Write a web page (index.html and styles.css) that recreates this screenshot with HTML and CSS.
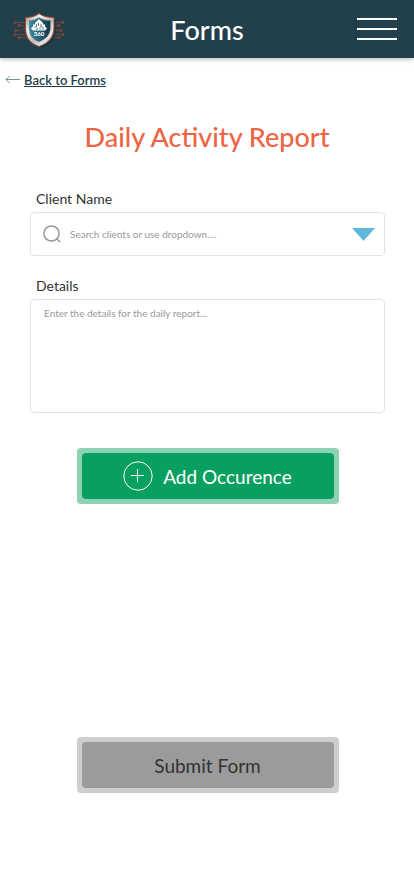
FILE: index.html
```html
<!DOCTYPE html>
<html lang="en">
<head>
<meta charset="utf-8">
<meta name="viewport" content="width=device-width, initial-scale=1">
<title>Daily Activity Report</title>
<link rel="stylesheet" href="styles.css">
</head>
<body>
<header class="topbar">
  <a class="logo" href="#" aria-label="Home">
    <svg width="54" height="42" viewBox="0 0 54 42" aria-hidden="true">
      <defs>
        <linearGradient id="metal" x1="0" y1="0" x2="1" y2="1">
          <stop offset="0" stop-color="#8b8b8b"/>
          <stop offset=".3" stop-color="#f2f2f2"/>
          <stop offset=".55" stop-color="#b9b9b9"/>
          <stop offset=".75" stop-color="#e8e8e8"/>
          <stop offset="1" stop-color="#777"/>
        </linearGradient>
        <linearGradient id="core" x1="0" y1="0" x2="1" y2="0">
          <stop offset="0" stop-color="#3d8ba0"/>
          <stop offset="1" stop-color="#123644"/>
        </linearGradient>
      </defs>
      <g fill="none" stroke="#8d4335" stroke-width=".8">
        <path d="M3 12.500H14M6 15.500H11L14 18.500M4 20.500H9L11 18.500H14M3 24.500H14M6 27.500H15"/>
        <path d="M50 12.500H38M46 15.500H41L38 18.500M48 20.500H43L41 18.500H38M50 24.500H38M46 27.500H38"/>
      </g>
      <g fill="#204049" stroke="#b64a31" stroke-width=".8">
        <circle cx="2" cy="12.500" r="1.100"/><circle cx="6" cy="15.500" r="1.100"/><circle cx="3" cy="20.500" r="1.100"/><circle cx="2" cy="24.500" r="1.100"/><circle cx="6" cy="27.500" r="1.100"/>
        <circle cx="50" cy="12.500" r="1.100"/><circle cx="46" cy="15.500" r="1.100"/><circle cx="48" cy="20.500" r="1.100"/><circle cx="50" cy="24.500" r="1.100"/><circle cx="46" cy="27.500" r="1.100"/>
      </g>
      <path class="logo-shadow" d="M28 5C32 8 37 9 43 9V18C43 28 38 35 28 39Z"/>
      <path d="M26 3.500C30 6.500 35 7.500 41 7.500V17C41 27 36 33 26 36.500C16 33 12.500 27 12.500 17V7.500C17 7.500 22 6.500 26 3.500Z" fill="url(#metal)" stroke="#a3452f"/>
      <path d="M26 7.500C29 9.500 33 10.500 37.500 10.500V17C37.500 25 33 29 26 32C19 29 16 25 16 17V10.500C19 10.500 23 9.500 26 7.500Z" fill="url(#core)" stroke="#9a9a9a" stroke-width=".5"/>
      <path d="M26 9L30 13V14.500H32V16.500L34 18.500L32 20.500H20L18 18.500L20 16.500V14.500H22V13Z" fill="#fff"/>
      <path d="M23.500 14V17H21.500M25.500 13V16M28 14V17H30.500M22.500 19H25M27 17.500V20M29 19H31" fill="none" stroke="#2b6070" stroke-width=".8"/>
      <text class="logo-text" x="26" y="26" text-anchor="middle">360</text>
    </svg>
  </a>
  <h1 class="topbar-title">Forms</h1>
  <button class="menu" type="button" aria-label="Menu"><span></span><span></span><span></span></button>
</header>
<main class="page">
  <nav class="crumb">
    <a class="back" href="#">
      <svg width="15" height="8" viewBox="0 0 15 8" aria-hidden="true"><path d="M15 3.500H1M4.500 0L1 3.500L4.500 7" fill="none" stroke="#71909a"/></svg>
      <span>Back to Forms</span>
    </a>
  </nav>
  <h2 class="title">Daily Activity Report</h2>
  <form class="form">
    <label class="label" for="client">Client Name</label>
    <div class="search">
      <svg width="18" height="18" viewBox="0 0 18 18" aria-hidden="true"><circle cx="8.500" cy="8.500" r="7.600" fill="none" stroke="#999" stroke-width="1.500"/><path d="M13.500 13.500L17.300 17.300" stroke="#999" stroke-width="1.500"/></svg>
      <input id="client" type="text" placeholder="Search clients or use dropdown....">
      <button class="drop" type="button" aria-label="Show clients">
        <svg width="23" height="13" viewBox="0 0 23 13" aria-hidden="true"><path d="M0 0H23L11.500 13Z" fill="#60b8d8"/></svg>
      </button>
    </div>
    <label class="label" for="details">Details</label>
    <textarea class="details" id="details" placeholder="Enter the details for the daily report..."></textarea>
    <button class="btn btn-add" type="button">
      <span class="btn-face">
        <svg width="30" height="30" viewBox="0 0 30 30" aria-hidden="true"><circle cx="15" cy="15" r="14.200" fill="none" stroke="#fff"/><path d="M8 14.500H21M14.500 8V21" stroke="#fff"/></svg>
        <span>Add Occurence</span>
      </span>
    </button>
    <button class="btn btn-submit" type="submit"><span class="btn-face">Submit Form</span></button>
  </form>
</main>
</body>
</html>
```
FILE: styles.css
```css
* {
  box-sizing: border-box;
}

body {
  margin: 0;
  background: #fff;
  color: #333;
  font-family: Lato, "Liberation Sans", sans-serif;
}

button,
input,
textarea {
  font-family: inherit;
}

.topbar {
  display: grid;
  grid-template-columns: 1fr auto 1fr;
  align-items: center;
  height: 58px;
  padding: 0 17px 0 13px;
  background: #22404b;
  box-shadow: 0 1px 5px rgba(0, 0, 0, 0.3);
}

.logo {
  display: flex;
}

.logo svg {
  margin-top: 4px;
}

.logo-shadow {
  fill: #142e37;
  opacity: 0.6;
}

.logo-text {
  fill: #fff;
  font-size: 6px;
  font-weight: 900;
}

.topbar-title {
  margin: 2px 0 0;
  padding-left: 4px;
  color: #fff;
  font-size: 27px;
  font-weight: 500;
  line-height: 32px;
}

.menu {
  display: flex;
  flex-direction: column;
  justify-self: end;
  gap: 8px;
  width: 40px;
  padding: 0;
  border: 0;
  background: none;
}

.menu span {
  height: 2px;
  background: #fff;
}

.crumb {
  display: flex;
  padding: 14px 5px 0;
}

.back {
  display: flex;
  align-items: center;
  gap: 4px;
  color: #22404b;
  font-size: 13px;
  font-weight: 600;
  line-height: 16px;
  text-decoration: none;
}

.back span {
  text-decoration: underline;
}

.title {
  margin: 31px 0 0;
  color: #ee6445;
  font-size: 27px;
  font-weight: 500;
  line-height: 36px;
  text-align: center;
}

.form {
  display: flex;
  flex-direction: column;
  padding: 35px 29px 32px 30px;
}

.label {
  padding-left: 6px;
  font-size: 14px;
  line-height: 18px;
  margin-bottom: 4px;
}

.search {
  display: flex;
  align-items: center;
  gap: 9px;
  height: 44px;
  margin-bottom: 21px;
  padding: 0 9px 0 12px;
  border: 1px solid #e2e2e2;
  border-radius: 4px;
}

.search input {
  flex: 1;
  min-width: 0;
  padding: 0;
  border: 0;
  outline: 0;
  background: none;
  font-size: 10px;
}

::placeholder {
  color: #999;
  opacity: 1;
}

.drop {
  display: flex;
  padding: 0;
  border: 0;
  background: none;
}

.details {
  height: 114px;
  padding: 7px 13px;
  border: 1px solid #e2e2e2;
  border-radius: 4px;
  font-size: 10px;
  line-height: 12px;
  resize: none;
}

.btn {
  display: flex;
  width: 100%;
  max-width: 262px;
  height: 56px;
  margin: 0 auto;
  padding: 5px;
  border: 0;
  border-radius: 4px;
  font-size: 19px;
}

.btn-face {
  display: flex;
  flex: 1;
  align-items: center;
  justify-content: center;
  align-self: stretch;
  gap: 10px;
  border-radius: 4px;
}

.btn-add {
  margin-top: 35px;
  background: #8cd2b3;
  color: #fff;
}

.btn-add .btn-face {
  background: #08a060;
}

.btn-submit {
  margin-top: 233px;
  background: #cecece;
  color: #333;
}

.btn-submit .btn-face {
  background: #9b9b9b;
}
```
